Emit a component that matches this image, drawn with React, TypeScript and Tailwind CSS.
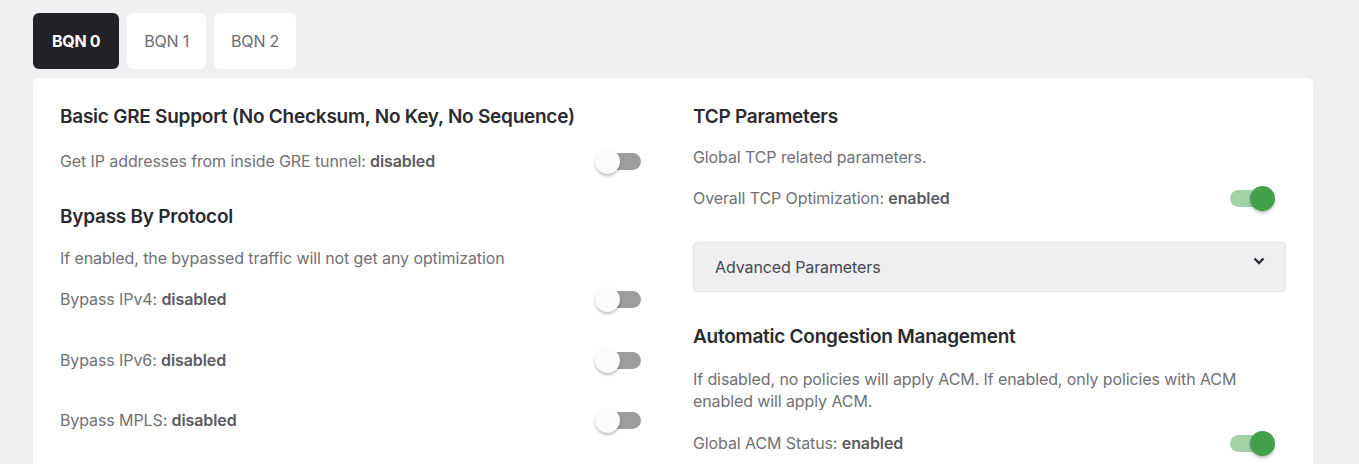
const font = { fontFamily: "Inter, 'Noto Sans', sans-serif" };

function Toggle({ on }: { on: boolean }) {
  return (
    <div className="relative w-[47px] h-[25px] shrink-0">
      <div
        className={
          on
            ? "absolute left-[2px] top-[4px] w-[44px] h-[17px] rounded-full bg-[#a3d2a6]"
            : "absolute left-[2px] top-[4px] w-[44px] h-[17px] rounded-full bg-[#9d9d9f]"
        }
      />
      <div
        className={
          on
            ? "absolute left-[22px] top-0 w-[25px] h-[25px] rounded-full bg-[#43a04b] shadow-[0_2px_3px_rgba(0,0,0,0.25)]"
            : "absolute left-0 top-0 w-[25px] h-[25px] rounded-full bg-[#fbfbfc] shadow-[0_2px_3px_rgba(0,0,0,0.25)]"
        }
      />
    </div>
  );
}

function Row({ label, on, className }: { label: string; on: boolean; className: string }) {
  return (
    <div className={"flex items-center justify-between h-[36px] pr-[11px] " + className}>
      <span className="text-[16px] text-[#717176] tracking-[-0.1px]">
        {label}: <span className="font-semibold text-[#5a5a5f]">{on ? "enabled" : "disabled"}</span>
      </span>
      <Toggle on={on} />
    </div>
  );
}

function Heading({ children, className }: { children: string; className?: string }) {
  return (
    <h2 className={"text-[19px] leading-[28px] font-semibold text-[#2b2a2f] tracking-[-0.25px] " + (className ?? "")}>
      {children}
    </h2>
  );
}

export default function App() {
  const tabs = ["BQN 0", "BQN 1", "BQN 2"];
  return (
    <div className="min-h-screen bg-[#f0eff2] px-[33px] pt-[13px]" style={font}>
      <div className="flex gap-[8px]">
        {tabs.map((t, i) => (
          <button
            key={t}
            className={
              i === 0
                ? "h-[56px] px-[19px] rounded-[6px] bg-[#222125] text-white text-[16px] font-bold tracking-[-0.3px]"
                : "h-[56px] px-[17px] rounded-[6px] bg-white text-[#6e6d73] text-[16px] tracking-[-0.2px]"
            }
          >
            {t}
          </button>
        ))}
      </div>

      <div className="mt-[9px] w-[1280px] bg-white rounded-[6px] px-[27px] pt-[25px] pb-8 grid grid-cols-2 gap-x-[40px]">
        <div>
          <Heading>Basic GRE Support (No Checksum, No Key, No Sequence)</Heading>
          <Row label="Get IP addresses from inside GRE tunnel" on={false} className="mt-[12px]" />
          <Heading className="mt-[24px]">Bypass By Protocol</Heading>
          <p className="mt-[16px] text-[16px] leading-[22px] text-[#717176] tracking-[-0.1px]">
            If enabled, the bypassed traffic will not get any optimization
          </p>
          <Row label="Bypass IPv4" on={false} className="mt-[12px]" />
          <Row label="Bypass IPv6" on={false} className="mt-[25px]" />
          <Row label="Bypass MPLS" on={false} className="mt-[24px]" />
        </div>

        <div>
          <Heading>TCP Parameters</Heading>
          <p className="mt-[15px] text-[16px] leading-[22px] text-[#717176] tracking-[-0.1px]">
            Global TCP related parameters.
          </p>
          <Row label="Overall TCP Optimization" on={true} className="mt-[12px]" />
          <div className="mt-[26px] h-[50px] flex items-center justify-between pl-[21px] pr-[20px] bg-[#efeef1] border border-[#e3e2e5] rounded-[4px]">
            <span className="text-[16px] text-[#47464b] tracking-[-0.1px]">Advanced Parameters</span>
            <svg width="12" height="8" viewBox="0 0 12 8" className="-mt-[12px]">
              <path d="M1.5 1.5 L6 6 L10.5 1.5" fill="none" stroke="#2d2c31" strokeWidth="2.4" />
            </svg>
          </div>
          <Heading className="mt-[31px]">Automatic Congestion Management</Heading>
          <p className="mt-[17px] text-[16px] leading-[22px] text-[#717176] tracking-[-0.1px] pr-[40px]">
            If disabled, no policies will apply ACM. If enabled, only policies with ACM enabled will apply ACM.
          </p>
          <Row label="Global ACM Status" on={true} className="mt-[13px]" />
        </div>
      </div>
    </div>
  );
}
